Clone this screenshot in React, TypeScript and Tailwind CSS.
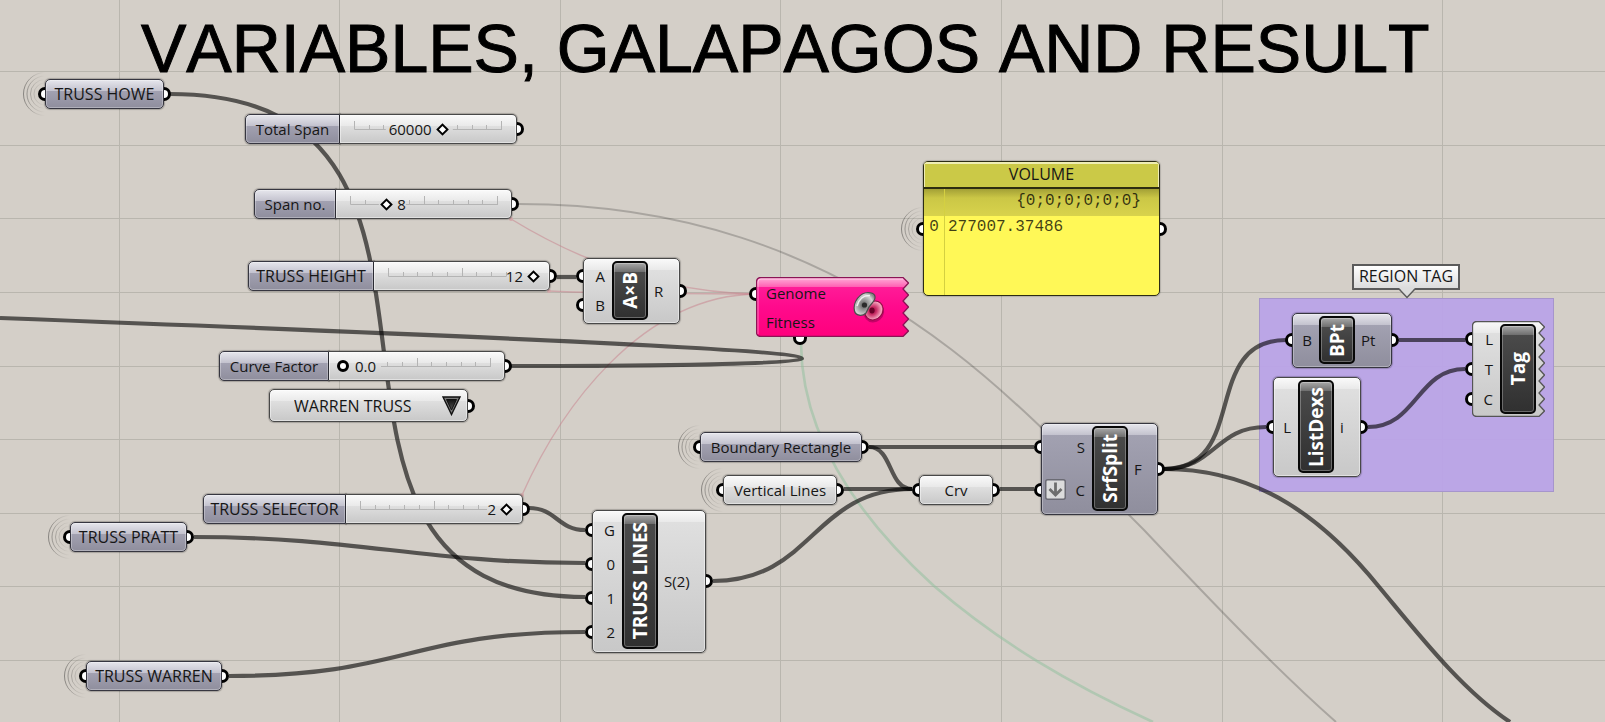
import { useId, useState, type ReactNode } from "react";

const LIGHT =
  "border border-[#484848] shadow-[0_0_1px_1px_rgba(0,0,0,0.22),inset_0_0_0_1px_rgba(255,255,255,0.45)] bg-[linear-gradient(to_bottom,#fafafa_0,#e9e9e9_11px,#dfdfdf_11px,#c8c8c8_100%)]";
const MAUVE =
  "border border-[#363640] shadow-[0_0_1px_1px_rgba(0,0,0,0.22),inset_0_0_0_1px_rgba(255,255,255,0.3)] bg-[linear-gradient(to_bottom,#e6e6ec_0,#c3c2ce_11px,#a2a1b1_11px,#8f8e9d_100%)]";

const verticals = [119, 339, 560, 780, 1001, 1222, 1442];
const horizontals = [71, 145, 218, 292, 366, 439, 513, 586, 660];

const wires = [
  "M170 94 C530 94 240 597 585 597",
  "M0 318 C500 337 802 350 802 359 C802 365 600 366 511 366",
  "M557 277 H576",
  "M529 508 C556 508 558 530 585 530",
  "M194 537 C360 537 420 563 585 563",
  "M229 676 C407 676 407 632 585 632",
  "M713 581 C813 581 813 489 912 489",
  "M869 447 H1034",
  "M869 447 C893 447 888 489 912 489",
  "M844 489 H912",
  "M1000 489 H1034",
  "M1164 469 C1250 469 1200 340 1286 340",
  "M1164 469 C1215 469 1215 427 1266 427",
  "M1164 469 C1260 469 1325 520 1380 588 C1420 636 1462 690 1510 722",
  "M1399 340 H1465",
  "M1368 427 C1417 427 1417 369 1465 369",
];

function Background() {
  return (
    <svg className="pointer-events-none absolute left-0 top-0 h-full w-full" aria-hidden="true">
      {verticals.map((x) => (
        <rect key={x} x={x} y={0} width={1} height="100%" fill="#b9b6ae" />
      ))}
      {horizontals.map((y) => (
        <rect key={y} x={0} y={y} width="100%" height={1} fill="#b9b6ae" />
      ))}
    </svg>
  );
}

function Wires() {
  return (
    <svg className="pointer-events-none absolute left-0 top-0 h-[722px] w-[1605px]" fill="none" aria-hidden="true">
      <g stroke="#c87f8b" strokeOpacity={0.5} strokeWidth={1.4}>
        <path d="M511 219 C565 252 650 292 756 294" />
        <path d="M549 291 C610 294 660 293 756 294" />
        <path d="M522 495 C560 410 640 296 756 294" />
      </g>
      <g fill="#d3a9ab">
        <circle cx={511} cy={219} r={2} />
        <circle cx={549} cy={291} r={2} />
        <circle cx={522} cy={495} r={2} />
      </g>
      <path
        d="M801 344 C802 430 850 510 934 586 C1000 643 1070 684 1153 722"
        stroke="#8dbf9b"
        strokeOpacity={0.5}
        strokeWidth={2.6}
      />
      <path
        d="M519 204 C671 204 815 245 952 350 C1020 402 1080 466 1144 530 C1210 600 1275 668 1336 722"
        stroke="#000"
        strokeOpacity={0.2}
        strokeWidth={2}
      />
      <g stroke="#000" strokeOpacity={0.6} strokeWidth={4.2}>
        {wires.map((d) => (
          <path key={d} d={d} />
        ))}
      </g>
    </svg>
  );
}

function GripIn() {
  return (
    <span className="absolute -left-[7px] top-1/2 h-[14px] w-[7px] -translate-y-1/2 rounded-l-full border-[3px] border-r-0 border-black bg-white" />
  );
}

function GripOut() {
  return (
    <span className="absolute -right-[7px] top-1/2 h-[14px] w-[7px] -translate-y-1/2 rounded-r-full border-[3px] border-l-0 border-black bg-white" />
  );
}

function Waves() {
  const id = useId();
  return (
    <svg
      className="pointer-events-none absolute -left-6 top-1/2 h-12 w-6 -translate-y-1/2"
      viewBox="0 0 24 48"
      fill="none"
      aria-hidden="true"
    >
      <linearGradient id={id} gradientUnits="userSpaceOnUse" x1="0" y1="0" x2="24" y2="0">
        <stop offset="0" stopColor="#000" stopOpacity="0.42" />
        <stop offset="0.6" stopColor="#000" stopOpacity="0.1" />
        <stop offset="1" stopColor="#000" stopOpacity="0" />
      </linearGradient>
      {[21.5, 18, 14.5, 11].map((r) => (
        <circle key={r} cx={24} cy={24} r={r} stroke={`url(#${id})`} strokeWidth={1} />
      ))}
    </svg>
  );
}

function Param({ at, tone, waves = false, children }: { at: string; tone: string; waves?: boolean; children: ReactNode }) {
  return (
    <div className={`absolute ${at} h-[30px]`}>
      {waves && <Waves />}
      <div className={`flex h-full items-center justify-center rounded-[5px] ${tone}`}>{children}</div>
      <GripIn />
      <GripOut />
    </div>
  );
}

function NumberSlider({
  at,
  labelWidth,
  label,
  min,
  max,
  step = 1,
  initial,
  round = false,
}: {
  at: string;
  labelWidth: string;
  label: string;
  min: number;
  max: number;
  step?: number;
  initial: number;
  round?: boolean;
}) {
  const id = useId();
  const [value, setValue] = useState(initial);
  const ratio = (value - min) / (max - min);
  const text = step < 1 ? value.toFixed(1) : String(value);
  const before = ratio > 0.5;
  const x = ratio * 148;
  const gapStart = before ? x - 12 - text.length * 9 : x - 7;
  const gapEnd = before ? x + 10 : x + 11 + text.length * 9;
  const place = before
    ? { right: `calc(26px + (100% - 30px) * ${1 - ratio})` }
    : { left: `calc(26px + (100% - 30px) * ${ratio})` };
  const thumb = round
    ? "left-[8px] w-[calc(100%-18px)] [&::-webkit-slider-thumb]:size-3 [&::-webkit-slider-thumb]:rounded-full [&::-webkit-slider-thumb]:border-[3px]"
    : "left-[11px] w-[calc(100%-22px)] [&::-webkit-slider-thumb]:size-[9px] [&::-webkit-slider-thumb]:rotate-45 [&::-webkit-slider-thumb]:border-2";
  return (
    <div className={`absolute ${at} h-[30px]`}>
      <div className="flex h-full">
        <label
          htmlFor={id}
          className={`flex shrink-0 items-center justify-center whitespace-nowrap rounded-l-[5px] ${labelWidth} ${MAUVE}`}
        >
          {label}
        </label>
        <div className={`relative flex-1 rounded-r-[5px] border-l-0 ${LIGHT}`}>
          <svg className="absolute left-[14px] top-[6px] h-[10px] w-[150px]" stroke="#b4b4b4" aria-hidden="true">
            {gapStart > 0 && <path d={`M0.5 8.5 H${gapStart}`} />}
            {gapEnd < 148 && <path d={`M${gapEnd} 8.5 H148`} />}
            {Array.from({ length: 11 }, (_, i) => i)
              .filter((i) => i * 14.7 < gapStart || i * 14.7 > gapEnd)
              .map((i) => (
                <path key={i} d={`M${Math.round(i * 14.7) + 0.5} ${i % 5 === 0 ? 0 : 4} V8.5`} />
              ))}
          </svg>
          <output htmlFor={id} className="absolute top-0 leading-[28px]" style={place}>
            {text}
          </output>
          <input
            id={id}
            type="range"
            min={min}
            max={max}
            step={step}
            value={value}
            onChange={(e) => setValue(Number(e.target.value))}
            className={`absolute top-0 h-[28px] cursor-pointer appearance-none bg-transparent [&::-webkit-slider-thumb]:appearance-none [&::-webkit-slider-thumb]:border-black [&::-webkit-slider-thumb]:bg-white ${thumb}`}
          />
        </div>
      </div>
      <GripOut />
    </div>
  );
}

function Core({ children }: { children: ReactNode }) {
  return (
    <div className="flex w-[36px] shrink-0 items-center justify-center rounded-[5px] border-2 border-[#080808] bg-[linear-gradient(to_bottom,#a8a8a8_0,#6e6e6e_9px,#4a4a4a_9px,#303030_100%)] shadow-[inset_0_0_0_1px_rgba(255,255,255,0.28)]">
      <span className="rotate-180 whitespace-nowrap text-[19px] font-bold leading-[28px] text-white [text-orientation:sideways] [writing-mode:vertical-rl]">
        {children}
      </span>
    </div>
  );
}

function Ports({ names, side, className }: { names: string[]; side: "in" | "out"; className: string }) {
  return (
    <div className={`flex flex-col ${className}`}>
      {names.map((name) => (
        <div key={name} className={`relative flex flex-1 items-center ${side === "in" ? "-ml-1 pl-1" : "-mr-1 pr-1"}`}>
          {side === "in" ? <GripIn /> : <GripOut />}
          <span className={side === "in" ? "flex-1 pr-[7px] text-right" : "flex-1 pl-[6px] text-left"}>{name}</span>
        </div>
      ))}
    </div>
  );
}

function Component({
  at,
  tone,
  name,
  inputs,
  outputs,
  left,
  children,
}: {
  at: string;
  tone: string;
  name: string;
  inputs: string[];
  outputs: string[];
  left: string;
  children?: ReactNode;
}) {
  return (
    <section className={`absolute flex rounded-[5px] p-[3px] pt-[2px] ${at} ${tone}`}>
      <Ports names={inputs} side="in" className={left} />
      <Core>{name}</Core>
      <Ports names={outputs} side="out" className="flex-1" />
      {children}
    </section>
  );
}

function toothed(width: number, height: number, teeth: number) {
  const step = height / teeth;
  let d = `M5 0.5 H${width - 6}`;
  for (let i = 0; i < teeth; i++) {
    d += ` L${width - 0.5} ${(i + 0.5) * step} L${width - 6} ${i === teeth - 1 ? height - 0.5 : (i + 1) * step}`;
  }
  return `${d} H5 Q0.5 ${height - 0.5} 0.5 ${height - 5} V5 Q0.5 0.5 5 0.5 Z`;
}

function Galapagos() {
  return (
    <section className="absolute left-[756px] top-[277px] h-[60px] w-[153px]">
      <svg className="absolute inset-0 size-full" viewBox="0 0 153 60" aria-hidden="true">
        <linearGradient id="pink" gradientUnits="userSpaceOnUse" x1="0" y1="0" x2="0" y2="60">
          <stop offset="0" stopColor="#ffb4dc" />
          <stop offset="0.16" stopColor="#ff62b4" />
          <stop offset="0.16" stopColor="#ff1c98" />
          <stop offset="0.5" stopColor="#ff0a8c" />
          <stop offset="1" stopColor="#ff007c" />
        </linearGradient>
        <path d={toothed(153, 60, 5)} fill="url(#pink)" stroke="#8a1455" strokeWidth={1.3} />
        <path d="M147 2 H5 Q2 2 2 5 V57" fill="none" stroke="#fff" strokeOpacity={0.45} />
      </svg>
      <div className="relative flex h-full flex-col pl-[10px]">
        <span className="pt-[4px] leading-[24px]">Genome</span>
        <span className="pt-[5px] leading-[24px]">Fitness</span>
      </div>
      <svg className="absolute left-[96px] top-[13px] size-[34px]" viewBox="0 0 34 34" aria-hidden="true">
        <radialGradient id="seed" cx="0.45" cy="0.55" r="0.6">
          <stop offset="0" stopColor="#555" />
          <stop offset="0.3" stopColor="#8c8c8c" />
          <stop offset="0.75" stopColor="#d4d4d4" />
          <stop offset="1" stopColor="#8a8a8a" />
        </radialGradient>
        <radialGradient id="berry" cx="0.45" cy="0.45" r="0.6">
          <stop offset="0" stopColor="#8c0a3c" />
          <stop offset="0.35" stopColor="#c92f66" />
          <stop offset="0.8" stopColor="#f4a3bd" />
          <stop offset="1" stopColor="#b21c55" />
        </radialGradient>
        <ellipse cx={22} cy={22.5} rx={10.5} ry={9.5} fill="#7d0044" opacity={0.45} transform="rotate(-40 22 22.5)" />
        <ellipse cx={22} cy={20.5} rx={10} ry={8.6} fill="url(#berry)" stroke="#8d0c42" transform="rotate(-50 22 20.5)" />
        <path
          d="M2.5 21 C0.5 12 8 2.5 16 2.5 C23 2.5 25 7 21 12 C18 15 15.5 19 14 23 C10 27 3.5 25.5 2.5 21 Z"
          fill="url(#seed)"
          stroke="#4d4d4d"
          strokeWidth={1.2}
        />
        <path d="M5 16 C7 9 12 5 18 5.5" fill="none" stroke="#fff" strokeOpacity={0.8} strokeWidth={1.6} />
        <circle cx={12.5} cy={15} r={2.6} fill="#2b2b2b" />
        <ellipse cx={20} cy={20.5} rx={2.6} ry={3} fill="#6a0028" />
      </svg>
      <span className="absolute -left-[7px] top-[10px] h-[14px] w-[7px] rounded-l-full border-[3px] border-r-0 border-black bg-white" />
      <span className="absolute -bottom-[8px] left-[37px] h-[8px] w-[14px] rounded-b-full border-[3px] border-t-0 border-black bg-white" />
    </section>
  );
}

function TagComponent() {
  return (
    <section className="absolute left-[1472px] top-[321px] h-[96px] w-[73px]">
      <svg className="absolute inset-0 size-full" viewBox="0 0 73 96" aria-hidden="true">
        <linearGradient id="silver" gradientUnits="userSpaceOnUse" x1="0" y1="0" x2="0" y2="96">
          <stop offset="0" stopColor="#fafafa" />
          <stop offset="0.12" stopColor="#e9e9e9" />
          <stop offset="0.12" stopColor="#dfdfdf" />
          <stop offset="1" stopColor="#c8c8c8" />
        </linearGradient>
        <path d={toothed(73, 96, 8)} fill="url(#silver)" stroke="#555" strokeWidth={1.3} />
      </svg>
      <div className="relative flex h-full py-[3px] pl-1">
        <Ports names={["L", "T", "C"]} side="in" className="w-[24px]" />
        <Core>Tag</Core>
      </div>
    </section>
  );
}

function VolumePanel() {
  return (
    <section className="absolute left-[923px] top-[161px] h-[135px] w-[237px]">
      <Waves />
      <div className="flex h-full flex-col overflow-hidden rounded-[5px] border border-[#2c2c14] bg-[#fff857] shadow-[0_0_1px_1px_rgba(0,0,0,0.15)]">
        <h2 className="h-[27px] border-b-2 border-[#2e2d10] bg-[#cbc947] text-center text-base leading-[25px] shadow-[inset_0_2px_0_#efedb4,inset_1px_0_0_#efedb4,inset_-1px_0_0_#efedb4]">
          VOLUME
        </h2>
        <div className="flex flex-1 font-['Liberation_Mono',monospace] text-base text-black/75">
          <div className="w-[21px] border-r border-[#c9c53c]/80">
            <div className="h-[27px] bg-[linear-gradient(to_bottom,#a3a036_0,#cbc746_9px,#d8d34c_100%)]" />
            <div className="pt-[2px] text-center leading-[18px]">0</div>
          </div>
          <div className="flex-1">
            <div className="h-[27px] bg-[linear-gradient(to_bottom,#a3a036_0,#cbc746_9px,#d8d34c_100%)] pr-[18px] text-right leading-[24px]">
              {"{0;0;0;0;0;0}"}
            </div>
            <div className="pl-[3px] pt-[2px] leading-[18px]">277007.37486</div>
          </div>
        </div>
      </div>
      <GripIn />
      <GripOut />
    </section>
  );
}

export default function App() {
  return (
    <main className="relative min-h-[722px] w-full overflow-hidden bg-[#d4cfc8] font-['Open_Sans','Noto_Sans',sans-serif] text-[15px] leading-6 text-[#161616]">
      <Background />
      <div className="absolute left-[1259px] top-[298px] h-[194px] w-[295px] border border-[#a695cc] bg-[#b9a3e8]/95" />
      <Wires />
      <h1 className="relative whitespace-nowrap pl-[141px] pt-[8px] font-['Liberation_Sans',Arial,sans-serif] text-[68px] leading-[80px] text-black [-webkit-text-stroke:1px_black] [font-kerning:none]">
        VARIABLES, GALAPAGOS AND RESULT
      </h1>

      <Param at="left-[45px] top-[79px] w-[119px] text-base" tone={MAUVE} waves>
        TRUSS HOWE
      </Param>
      <Param at="left-[70px] top-[522px] w-[117px] text-base" tone={MAUVE} waves>
        TRUSS PRATT
      </Param>
      <Param at="left-[86px] top-[661px] w-[136px] text-base" tone={MAUVE} waves>
        TRUSS WARREN
      </Param>
      <Param at="left-[700px] top-[432px] w-[162px]" tone={MAUVE} waves>
        Boundary Rectangle
      </Param>
      <Param at="left-[723px] top-[475px] w-[114px]" tone={LIGHT} waves>
        Vertical Lines
      </Param>
      <Param at="left-[919px] top-[475px] w-[74px]" tone={LIGHT}>
        Crv
      </Param>

      <NumberSlider at="left-[245px] top-[114px] w-[272px]" labelWidth="w-[95px]" label="Total Span" min={0} max={100000} initial={60000} />
      <NumberSlider at="left-[254px] top-[189px] w-[258px]" labelWidth="w-[82px]" label="Span no." min={0} max={33} initial={8} />
      <NumberSlider at="left-[248px] top-[261px] w-[302px]" labelWidth="w-[126px] text-base" label="TRUSS HEIGHT" min={1} max={12} initial={12} />
      <NumberSlider at="left-[219px] top-[351px] w-[286px]" labelWidth="w-[110px]" label="Curve Factor" min={0} max={1} step={0.1} initial={0} round />
      <NumberSlider at="left-[203px] top-[494px] w-[320px]" labelWidth="w-[143px] text-base" label="TRUSS SELECTOR" min={0} max={2} initial={2} />

      <div className="absolute left-[269px] top-[389px] h-[33px] w-[199px] text-base">
        <select
          aria-label="Truss type"
          defaultValue="WARREN TRUSS"
          className={`h-full w-full appearance-none rounded-[5px] pl-[24px] ${LIGHT}`}
        >
          <option>WARREN TRUSS</option>
        </select>
        <svg className="pointer-events-none absolute right-[7px] top-[7px] h-[20px] w-[19px]" viewBox="0 0 19 20" aria-hidden="true">
          <linearGradient id="arrow" x1="0" y1="0" x2="0" y2="1">
            <stop offset="0" stopColor="#111" />
            <stop offset="1" stopColor="#555" />
          </linearGradient>
          <path d="M1 1 H18 L9.5 18.5 Z" fill="#7a7a7a" stroke="#111" strokeWidth={1.4} />
          <path d="M4.5 3.5 H14.5 L9.5 14 Z" fill="url(#arrow)" stroke="#111" strokeWidth={1} />
        </svg>
        <GripOut />
      </div>

      <Component at="left-[583px] top-[258px] h-[66px] w-[97px]" tone={LIGHT} name="A×B" inputs={["A", "B"]} outputs={["R"]} left="w-[25px]" />
      <Component
        at="left-[592px] top-[510px] h-[143px] w-[114px]"
        tone={LIGHT}
        name="TRUSS LINES"
        inputs={["G", "0", "1", "2"]}
        outputs={["S(2)"]}
        left="w-[26px]"
      />
      <Component
        at="left-[1041px] top-[423px] h-[92px] w-[117px]"
        tone={MAUVE}
        name="SrfSplit"
        inputs={["S", "C"]}
        outputs={["F"]}
        left="w-[47px]"
      >
        <svg className="absolute bottom-[14px] left-[3px] size-[21px]" viewBox="0 0 21 21" aria-hidden="true">
          <rect x={0.75} y={0.75} width={19.5} height={19.5} rx={2} fill="#dcdcdc" stroke="#6b6b74" strokeWidth={1.5} />
          <path d="M10.5 3.5 V15.5 M4.5 10 L10.5 16 L16.5 10" fill="none" stroke="#6e6e6e" strokeWidth={2.8} />
        </svg>
      </Component>
      <Component at="left-[1292px] top-[313px] h-[55px] w-[100px]" tone={MAUVE} name="BPt" inputs={["B"]} outputs={["Pt"]} left="w-[23px]" />
      <Component at="left-[1273px] top-[377px] h-[100px] w-[88px]" tone={LIGHT} name="ListDexs" inputs={["L"]} outputs={["i"]} left="w-[21px]" />
      <TagComponent />
      <Galapagos />
      <VolumePanel />

      <div className="absolute left-[1352px] top-[264px] h-[26px] w-[108px] border-2 border-[#5b5b5b] bg-[linear-gradient(to_bottom,#fff,#dcdcdc)] text-center text-base leading-[21px]">
        REGION TAG
        <svg className="absolute -bottom-[11px] left-[45px] h-[11px] w-[16px]" viewBox="0 0 16 11" aria-hidden="true">
          <path d="M0 0 H16 L8 9.5 Z" fill="#dcdcdc" />
          <path d="M0 1 L8 9.5 L16 1" fill="none" stroke="#5b5b5b" strokeWidth={1.5} />
        </svg>
      </div>
    </main>
  );
}
